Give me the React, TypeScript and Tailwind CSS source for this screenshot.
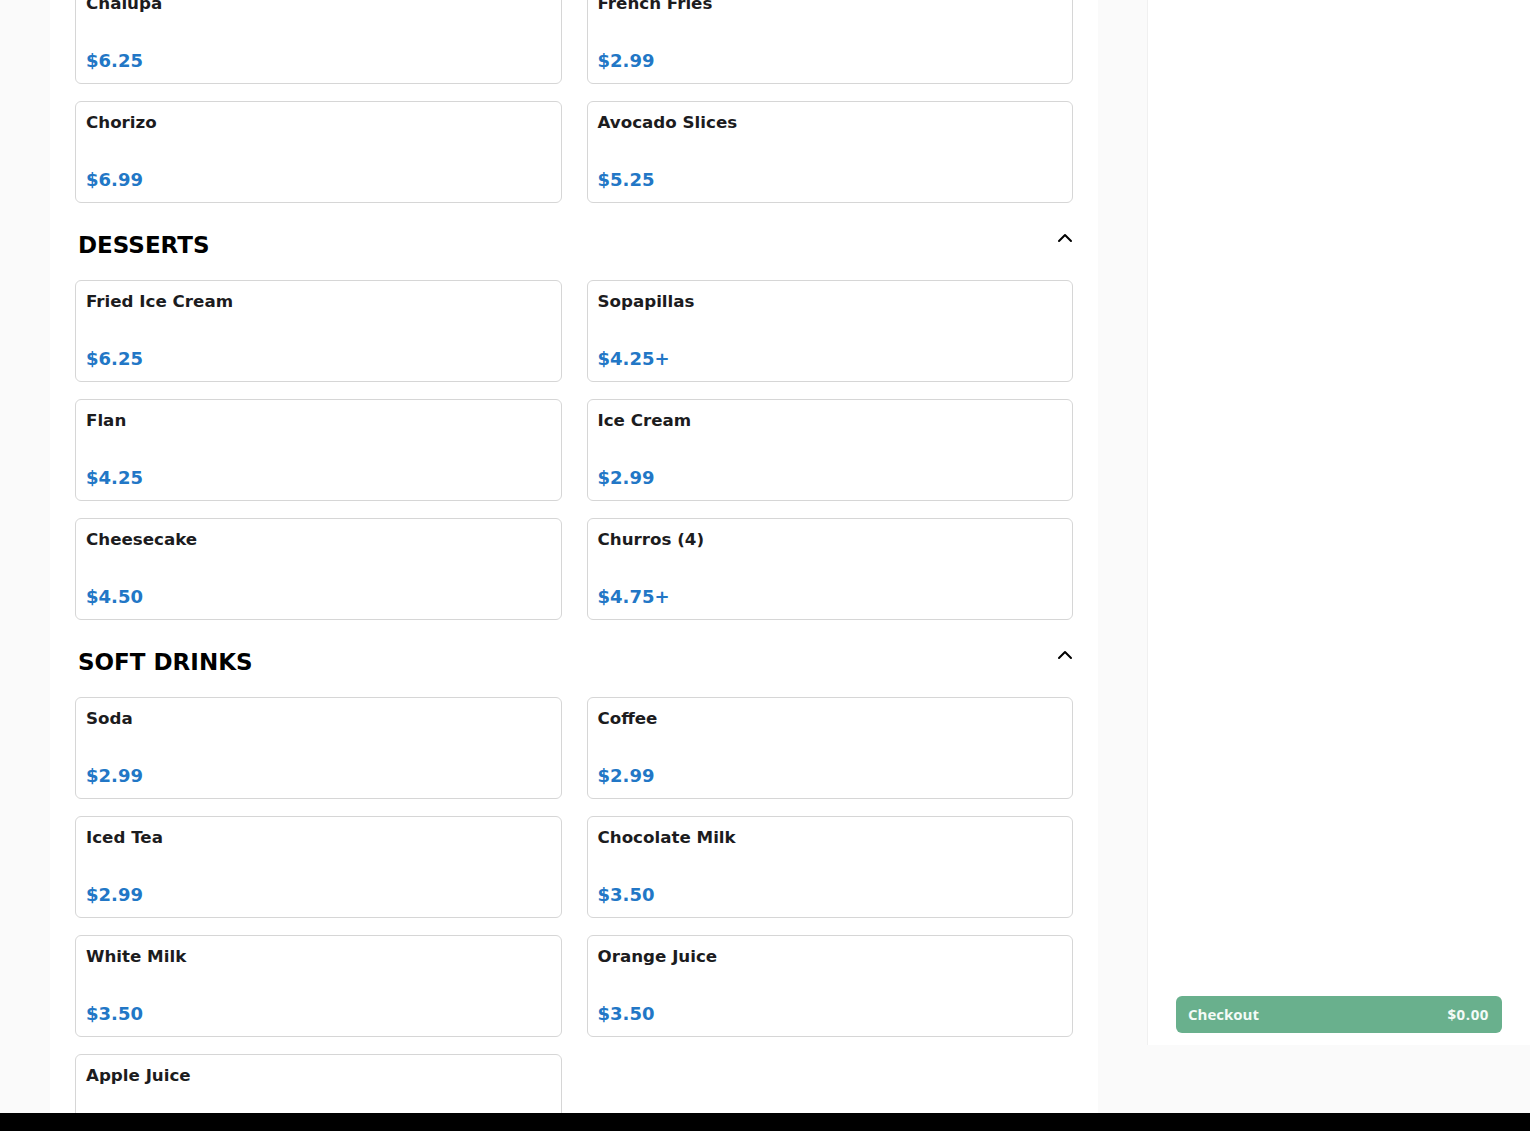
import { ChevronUp } from "lucide-react";

type Item = { name: string; price: string };

const sections: { title: string | null; items: Item[] }[] = [
  {
    title: null,
    items: [
      { name: "Chalupa", price: "$6.25" },
      { name: "French Fries", price: "$2.99" },
      { name: "Chorizo", price: "$6.99" },
      { name: "Avocado Slices", price: "$5.25" },
    ],
  },
  {
    title: "DESSERTS",
    items: [
      { name: "Fried Ice Cream", price: "$6.25" },
      { name: "Sopapillas", price: "$4.25+" },
      { name: "Flan", price: "$4.25" },
      { name: "Ice Cream", price: "$2.99" },
      { name: "Cheesecake", price: "$4.50" },
      { name: "Churros (4)", price: "$4.75+" },
    ],
  },
  {
    title: "SOFT DRINKS",
    items: [
      { name: "Soda", price: "$2.99" },
      { name: "Coffee", price: "$2.99" },
      { name: "Iced Tea", price: "$2.99" },
      { name: "Chocolate Milk", price: "$3.50" },
      { name: "White Milk", price: "$3.50" },
      { name: "Orange Juice", price: "$3.50" },
      { name: "Apple Juice", price: "$3.99" },
    ],
  },
];

function MenuCard({ item }: { item: Item }) {
  return (
    <div className="h-[102px] flex flex-col justify-between rounded-md border border-[#d6d6d6] bg-white pl-[10px] pr-3 pt-[9px] pb-[11px]">
      <div className="text-[16.7px] leading-[22px] font-bold text-[#1c1c1e]">{item.name}</div>
      <div className="text-[18px] leading-[22px] font-bold text-[#2277c6]">{item.price}</div>
    </div>
  );
}

export default function App() {
  return (
    <div
      className="h-[1131px] overflow-hidden flex flex-col bg-[#fafafa]"
      style={{ fontFamily: '"DejaVu Sans", sans-serif' }}
    >
      <div className="flex flex-1 min-h-0">
        {/* left gutter */}
        <div className="w-[50px] shrink-0" />

        {/* menu column */}
        <div className="w-[1048px] shrink-0 bg-white px-[25px] overflow-hidden">
          <div className="-mt-[18px]">
            {sections.map((section, idx) => (
              <div key={idx}>
                {section.title && (
                  <div className="flex items-start justify-between pl-[3px] mt-[28px] mb-[21px]">
                    <h2 className="text-[23px] leading-[28px] font-bold text-black">
                      {section.title}
                    </h2>
                    <ChevronUp size={24} strokeWidth={2} className="-mt-[5px] -mr-1 text-black" />
                  </div>
                )}
                <div className="grid grid-cols-2 gap-x-[25px] gap-y-[17px]">
                  {section.items.map((item) => (
                    <MenuCard key={item.name} item={item} />
                  ))}
                </div>
              </div>
            ))}
          </div>
        </div>

        {/* gap */}
        <div className="w-[49px] shrink-0" />

        {/* cart sidebar */}
        <div className="flex-1 h-[1045px] bg-white border-l border-[#f0f0f0] flex flex-col justify-end px-[28px] pb-[12px]">
          <button
            className="h-[37px] w-full rounded-md bg-[#69b08d] flex items-center justify-between pl-3 pr-[13px] text-[15px] font-bold text-[#f4fbf7]"
            style={{ fontFamily: '"Open Sans", sans-serif' }}
          >
            <span>Checkout</span>
            <span className="tracking-[0.6px]">$0.00</span>
          </button>
        </div>
      </div>
      <div className="h-[18px] bg-black shrink-0" />
    </div>
  );
}
